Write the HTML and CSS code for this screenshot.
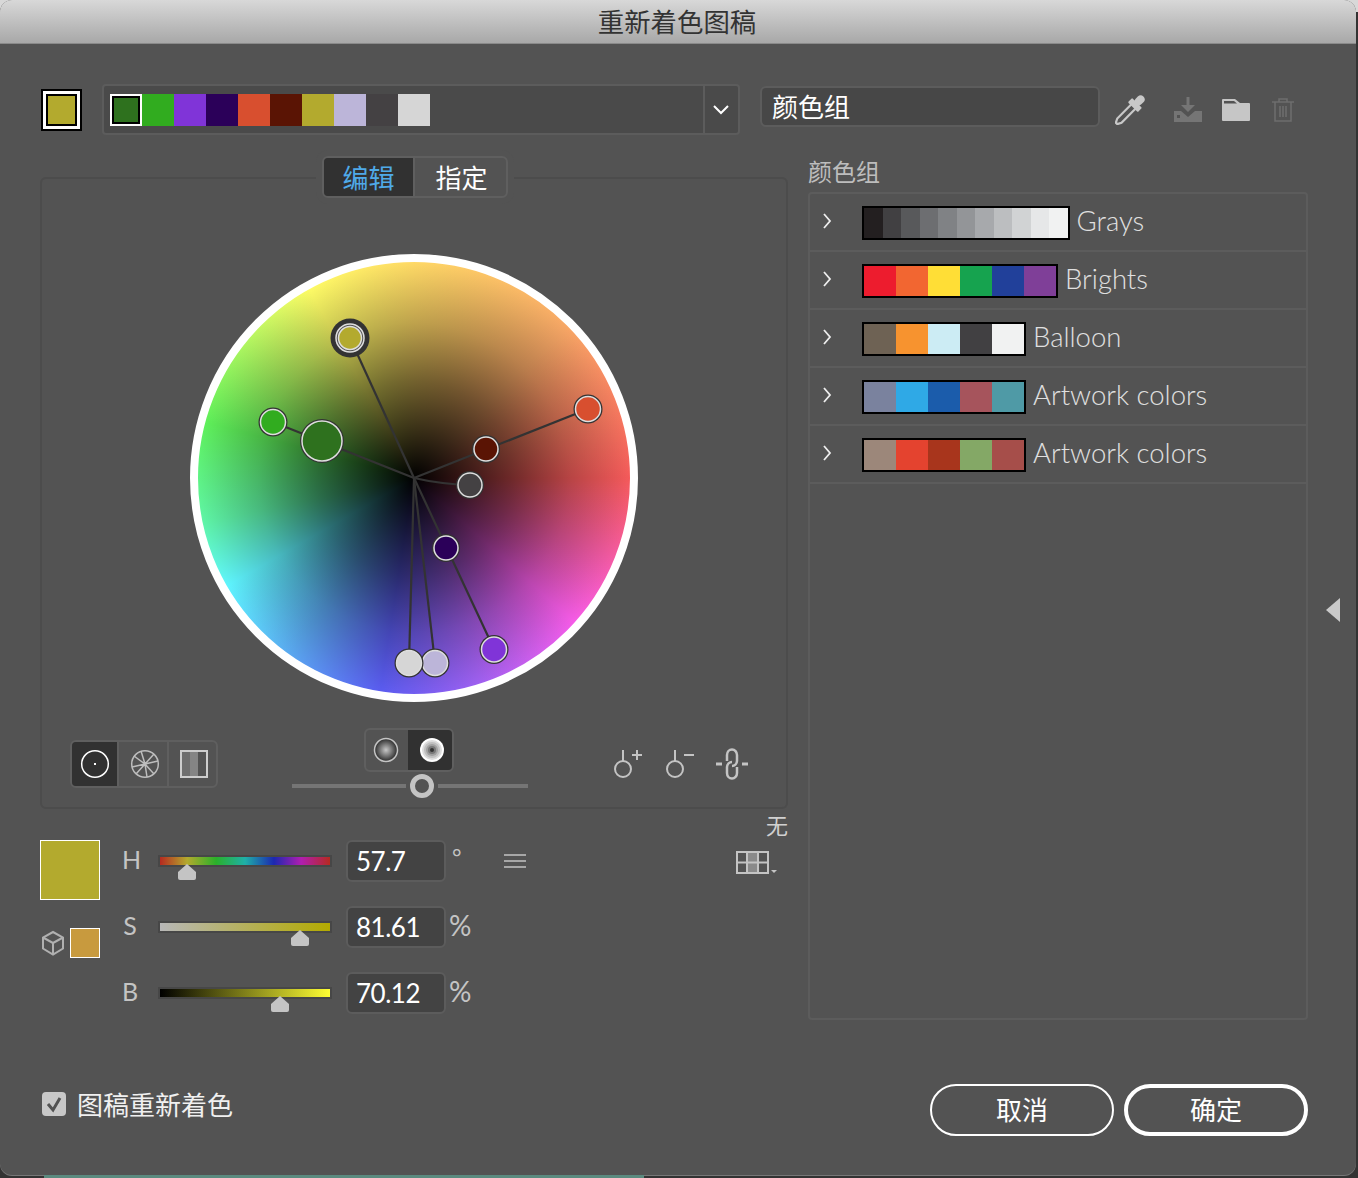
FILE: index.html
```html
<!DOCTYPE html>
<html>
<head>
    <title>重新着色图稿</title>
    <link rel="stylesheet" href="styles.css">
</head>
<body>
    <div class="dialog">
        <div class="titlebar">重新着色图稿</div>

        <div class="top-row">
            <div class="active-swatch"><span></span></div>
            <div class="harmony-bar">
                <div class="harmony-swatches">
                    <span class="selected" style="background-color: #2e711e"></span>
                    <span style="background-color: #31ac1f"></span>
                    <span style="background-color: #8034d8"></span>
                    <span style="background-color: #2b0059"></span>
                    <span style="background-color: #d84f2f"></span>
                    <span style="background-color: #5a1404"></span>
                    <span style="background-color: #b3aa2e"></span>
                    <span style="background-color: #bcb5d9"></span>
                    <span style="background-color: #444143"></span>
                    <span style="background-color: #d6d6d6"></span>
                </div>
                <div class="harmony-arrow">
                    <svg width="16" height="10" viewBox="0 0 16 10"><path d="M1 1l7 7 7-7" fill="none" stroke="#fff" stroke-width="2"/></svg>
                </div>
            </div>
            <div class="name-field">颜色组</div>
            <div class="top-icons">
                <svg class="icon-dropper" width="30" height="30" viewBox="0 0 30 30">
                    <g transform="rotate(45 15 15)">
                        <rect x="11" y="-4" width="8" height="11" rx="4" fill="#c8c8c8"/>
                        <rect x="8" y="5" width="14" height="6" rx="1" fill="#c8c8c8"/>
                        <path d="M12 10v20l2 4h2l2-4v-20" fill="none" stroke="#c8c8c8" stroke-width="2.200"/>
                    </g>
                </svg>
                <svg class="icon-save" width="28" height="25" viewBox="0 0 28 25">
                    <path d="M12.500 0h3v8h5.500l-7 7-7-7h5.500z" fill="#757575"/>
                    <path fill-rule="evenodd" d="M0 14h7l7 6 7-6h7v11h-28zM3 18v3h3v-3z" fill="#757575"/>
                </svg>
                <svg class="icon-folder" width="28" height="22" viewBox="0 0 28 22">
                    <path d="M0 1q0-1 1-1h12l5 4h9q1 0 1 1v16q0 1-1 1h-26q-1 0-1-1z" fill="#c6c6c6"/>
                    <path d="M2 2h10l3 2.500h-13z" fill="#535353"/>
                </svg>
                <svg class="icon-trash" width="22" height="24" viewBox="0 0 22 24">
                    <path d="M0 4h22M7 4v-3h8v3M3 4v19h16v-19M8 8v11M11 8v11M14 8v11" fill="none" stroke="#6e6e6e" stroke-width="1.500"/>
                </svg>
            </div>
        </div>

        <div class="main">
            <div class="left-col">
                <div class="tabs">
                    <div class="tab active">编辑</div>
                    <div class="tab">指定</div>
                </div>

                <div class="panel">
                    <div class="wheel">
                        <svg class="wheel-nodes" width="448" height="448" viewBox="0 0 448 448">
                            <g class="links">
                                <path d="M224 224L160 84"/>
                                <path d="M224 224L83 168"/>
                                <path d="M224 224L398 155"/>
                                <path d="M224 224Q250 230 280 231"/>
                                <path d="M224 224L304 395"/>
                                <path d="M224 224L245 409"/>
                                <path d="M224 224L219 409"/>
                            </g>
                            <circle class="halo" cx="160" cy="84" r="19.500"/>
                            <circle class="node" cx="160" cy="84" r="14" fill="#535353"/>
                            <circle class="node" cx="160" cy="84" r="11.500" fill="#b3aa2e" stroke="#333"/>
                            <circle class="halo" cx="398" cy="155" r="14.500"/>
                            <circle class="node" cx="398" cy="155" r="12.500" fill="#d84f2f"/>
                            <circle class="halo" cx="296" cy="195" r="14"/>
                            <circle class="node" cx="296" cy="195" r="12" fill="#5a1404"/>
                            <circle class="halo" cx="280" cy="231" r="14"/>
                            <circle class="node" cx="280" cy="231" r="12" fill="#444143"/>
                            <circle class="halo" cx="256" cy="294" r="14"/>
                            <circle class="node" cx="256" cy="294" r="12" fill="#2b0059"/>
                            <circle class="halo" cx="304" cy="395.500" r="14.500"/>
                            <circle class="node" cx="304" cy="395.500" r="12.500" fill="#8034d8"/>
                            <circle class="halo" cx="245" cy="409" r="14.500"/>
                            <circle class="node" cx="245" cy="409" r="12.500" fill="#bcb5d9"/>
                            <circle class="halo" cx="219" cy="409" r="14.500"/>
                            <circle class="node" cx="219" cy="409" r="12.500" fill="#d6d6d6"/>
                            <circle class="halo" cx="83" cy="168" r="14.500"/>
                            <circle class="node" cx="83" cy="168" r="12.500" fill="#31ac1f"/>
                            <circle class="halo" cx="132" cy="187" r="22"/>
                            <circle class="node" cx="132" cy="187" r="20" fill="#2e711e"/>
                        </svg>
                    </div>

                    <div class="tools">
                        <div class="mode-group">
                            <div class="mode active">
                                <svg width="30" height="30" viewBox="0 0 30 30">
                                    <circle cx="15" cy="15" r="13.300" fill="none" stroke="#fff" stroke-width="1.500"/>
                                    <rect x="14" y="14" width="2" height="2" fill="#fff"/>
                                </svg>
                            </div>
                            <div class="mode">
                                <svg width="30" height="30" viewBox="0 0 30 30">
                                    <circle cx="15" cy="15" r="13.300" fill="none" stroke="#bdbdbd" stroke-width="1.500"/>
                                    <path d="M15 15L11 2M15 15L24 5M15 15L28 12M15 15L24 25M15 15L17 28M15 15L6 25M15 15L2 18M15 15L4 7" stroke="#bdbdbd" stroke-width="1.500"/>
                                </svg>
                            </div>
                            <div class="mode">
                                <svg width="30" height="30" viewBox="0 0 30 30">
                                    <rect x="2" y="2" width="9" height="26" fill="#6e6e6e"/>
                                    <rect x="11" y="2" width="8" height="26" fill="#858585"/>
                                    <rect x="2" y="2" width="26" height="26" fill="none" stroke="#cdcdcd" stroke-width="2"/>
                                </svg>
                            </div>
                        </div>

                        <div class="wheel-control">
                            <div class="display-toggle">
                                <div class="display-btn">
                                    <svg width="26" height="26" viewBox="0 0 26 26">
                                        <defs>
                                            <radialGradient id="softDot">
                                                <stop offset="0" stop-color="#c8c8c8"/>
                                                <stop offset="1" stop-color="#2a2a2a"/>
                                            </radialGradient>
                                        </defs>
                                        <circle cx="13" cy="13" r="11.500" fill="url(#softDot)" stroke="#c4c4c4" stroke-width="1.500"/>
                                    </svg>
                                </div>
                                <div class="display-btn active">
                                    <svg width="26" height="26" viewBox="0 0 26 26">
                                        <circle cx="13" cy="13" r="12" fill="#fff"/>
                                        <circle cx="13" cy="13" r="10" fill="#ddd"/>
                                        <circle cx="13" cy="13" r="8" fill="#c0c0c0"/>
                                        <circle cx="13" cy="13" r="6" fill="#a0a0a0"/>
                                        <circle cx="13" cy="13" r="4" fill="#787878"/>
                                        <circle cx="13" cy="13" r="2" fill="#333"/>
                                    </svg>
                                </div>
                            </div>
                            <div class="range">
                                <span class="range-track before"></span>
                                <span class="range-thumb"></span>
                                <span class="range-track after"></span>
                            </div>
                        </div>

                        <div class="link-icons">
                            <svg width="28" height="28" viewBox="0 0 28 28">
                                <circle cx="9" cy="19" r="8" fill="none" stroke="#c4c4c4" stroke-width="2"/>
                                <path d="M9 0v11M18 5h10M23 0v10" stroke="#c4c4c4" stroke-width="2" fill="none"/>
                            </svg>
                            <svg width="28" height="28" viewBox="0 0 28 28">
                                <circle cx="9" cy="19" r="8" fill="none" stroke="#c4c4c4" stroke-width="2"/>
                                <path d="M9 0v11M18 5h10" stroke="#c4c4c4" stroke-width="2" fill="none"/>
                            </svg>
                            <svg width="32" height="32" viewBox="0 0 32 32">
                                <path d="M0 14.500h6v3h-6zM26 14.500h6v3h-6z" fill="#c4c4c4"/>
                                <path d="M11 13V7a5 5.500 0 0 1 10 0V13a5 5.500 0 0 1-5 5" fill="none" stroke="#c4c4c4" stroke-width="2.500"/>
                                <path d="M21 19V25a5 5.500 0 0 1-10 0V19a5 5.500 0 0 1 5-5" fill="none" stroke="#c4c4c4" stroke-width="2.500"/>
                            </svg>
                        </div>
                    </div>
                </div>

                <div class="picker">
                    <div class="picker-swatches">
                        <div class="big-swatch"></div>
                        <div class="gamut">
                            <svg width="24" height="26" viewBox="0 0 24 26">
                                <path d="M12 2l10 5.500v11l-10 6-10-6v-11zM2 7.500l10 5.500 10-5.500M12 13v11.500" fill="none" stroke="#b0b0b0" stroke-width="2"/>
                            </svg>
                            <div class="gamut-swatch"></div>
                        </div>
                    </div>

                    <div class="channels">
                        <div class="channel">
                            <div class="channel-label">H</div>
                            <div class="slider hue"><svg class="thumb" style="left: 18px" width="18" height="16" viewBox="0 0 18 16"><path d="M9 0l9 8v6q0 2-2 2h-14q-2 0-2-2v-6z"/></svg></div>
                            <div class="num-field">57.7</div>
                            <div class="unit deg">°</div>
                            <svg class="menu-icon" width="22" height="14" viewBox="0 0 22 14"><path d="M0 1h22M0 7h22M0 13h22" stroke="#c4c4c4" stroke-width="1.500"/></svg>
                        </div>
                        <div class="channel">
                            <div class="channel-label">S</div>
                            <div class="slider sat"><svg class="thumb" style="left: 131px" width="18" height="16" viewBox="0 0 18 16"><path d="M9 0l9 8v6q0 2-2 2h-14q-2 0-2-2v-6z"/></svg></div>
                            <div class="num-field">81.61</div>
                            <div class="unit">%</div>
                        </div>
                        <div class="channel">
                            <div class="channel-label">B</div>
                            <div class="slider bri"><svg class="thumb" style="left: 111px" width="18" height="16" viewBox="0 0 18 16"><path d="M9 0l9 8v6q0 2-2 2h-14q-2 0-2-2v-6z"/></svg></div>
                            <div class="num-field">70.12</div>
                            <div class="unit">%</div>
                        </div>
                    </div>

                    <div class="limit">
                        <div class="limit-label">无</div>
                        <div class="limit-icon">
                            <svg width="42" height="24" viewBox="0 0 42 24">
                                <rect x="11" y="1" width="11" height="21" fill="#8a8a8a"/>
                                <path d="M1 1h31v21h-31zM11 1v21M22 1v21M1 11.500h31" fill="none" stroke="#c4c4c4" stroke-width="2"/>
                                <path d="M35 19h6l-3 3z" fill="#c4c4c4"/>
                            </svg>
                        </div>
                    </div>
                </div>
            </div>

            <div class="right-col">
                <div class="list-title">颜色组</div>
                <div class="group-list">
                    <div class="group-row">
                        <svg class="row-arrow" width="10" height="16" viewBox="0 0 10 16"><path d="M2 1l6 7-6 7" fill="none" stroke="#eee" stroke-width="1.800"/></svg>
                        <div class="strip grays">
                            <span style="background-color: #231f20"></span>
                            <span style="background-color: #414042"></span>
                            <span style="background-color: #58595b"></span>
                            <span style="background-color: #6d6e71"></span>
                            <span style="background-color: #808285"></span>
                            <span style="background-color: #939598"></span>
                            <span style="background-color: #a7a9ac"></span>
                            <span style="background-color: #bcbec0"></span>
                            <span style="background-color: #d1d3d4"></span>
                            <span style="background-color: #e6e7e8"></span>
                            <span style="background-color: #f1f2f2"></span>
                        </div>
                        <div class="group-name">Grays</div>
                    </div>
                    <div class="group-row">
                        <svg class="row-arrow" width="10" height="16" viewBox="0 0 10 16"><path d="M2 1l6 7-6 7" fill="none" stroke="#eee" stroke-width="1.800"/></svg>
                        <div class="strip">
                            <span style="background-color: #ed1c2e"></span>
                            <span style="background-color: #f26631"></span>
                            <span style="background-color: #ffde36"></span>
                            <span style="background-color: #16a34f"></span>
                            <span style="background-color: #21409a"></span>
                            <span style="background-color: #7f3f98"></span>
                        </div>
                        <div class="group-name">Brights</div>
                    </div>
                    <div class="group-row">
                        <svg class="row-arrow" width="10" height="16" viewBox="0 0 10 16"><path d="M2 1l6 7-6 7" fill="none" stroke="#eee" stroke-width="1.800"/></svg>
                        <div class="strip">
                            <span style="background-color: #6e6254"></span>
                            <span style="background-color: #f7932f"></span>
                            <span style="background-color: #ccecf4"></span>
                            <span style="background-color: #414042"></span>
                            <span style="background-color: #f1f2f2"></span>
                        </div>
                        <div class="group-name">Balloon</div>
                    </div>
                    <div class="group-row">
                        <svg class="row-arrow" width="10" height="16" viewBox="0 0 10 16"><path d="M2 1l6 7-6 7" fill="none" stroke="#eee" stroke-width="1.800"/></svg>
                        <div class="strip">
                            <span style="background-color: #7a829e"></span>
                            <span style="background-color: #2fa9e6"></span>
                            <span style="background-color: #1b5cab"></span>
                            <span style="background-color: #a6545c"></span>
                            <span style="background-color: #4f9aa6"></span>
                        </div>
                        <div class="group-name">Artwork colors</div>
                    </div>
                    <div class="group-row">
                        <svg class="row-arrow" width="10" height="16" viewBox="0 0 10 16"><path d="M2 1l6 7-6 7" fill="none" stroke="#eee" stroke-width="1.800"/></svg>
                        <div class="strip">
                            <span style="background-color: #9c877a"></span>
                            <span style="background-color: #e4432f"></span>
                            <span style="background-color: #a8351c"></span>
                            <span style="background-color: #84a866"></span>
                            <span style="background-color: #a64e4a"></span>
                        </div>
                        <div class="group-name">Artwork colors</div>
                    </div>
                </div>
            </div>

            <svg class="collapse-arrow" width="14" height="24" viewBox="0 0 14 24"><path d="M14 0v24l-14-12z" fill="#cacaca"/></svg>
        </div>

        <div class="footer">
            <div class="recolor-check">
                <svg width="24" height="24" viewBox="0 0 24 24">
                    <rect width="24" height="24" rx="4" fill="#c8c8c8"/>
                    <path d="M6 12l5 6 7-12" fill="none" stroke="#535353" stroke-width="3"/>
                </svg>
                <span>图稿重新着色</span>
            </div>
            <div class="footer-buttons">
                <button class="btn">取消</button>
                <button class="btn primary">确定</button>
            </div>
        </div>
    </div>
    <div class="desktop-strip"></div>
</body>
</html>
```

FILE: styles.css
```css
* {
    box-sizing: border-box;
}

body {
    margin: 0;
    height: 1178px;
    overflow: hidden;
    background: linear-gradient(#d8d8d8 0, #d8d8d8 12px, #333 12px);
    font-family: "Lato", "Noto Sans CJK SC", sans-serif;
    color: #fff;
}

.dialog {
    width: 1356px;
    height: 1175px;
    display: flex;
    flex-direction: column;
    background-color: #535353;
    border-radius: 12px;
    box-shadow: 0 1px 0 #777;
    overflow: hidden;
}

.titlebar {
    height: 44px;
    flex: none;
    padding-right: 2px;
    text-align: center;
    font-size: 26.400px;
    line-height: 44px;
    color: #333;
    background: linear-gradient(#d8d8d8, #a8a8a8);
    border-bottom: 1px solid #8a8a8a;
}

/* top row */
.top-row {
    display: flex;
    align-items: center;
    margin: 40px 0 0 41px;
    height: 51px;
}

.active-swatch {
    width: 41px;
    height: 42px;
    border: 2px solid #000;
    background-color: #fff;
    padding: 3px;
}

.active-swatch span {
    display: block;
    height: 100%;
    background-color: #b3aa2e;
    border: 2px solid #000;
}

.harmony-bar {
    width: 638px;
    height: 51px;
    margin-left: 20px;
    display: flex;
    background-color: #4a4a4a;
    border: 2px solid #5c5c5c;
    border-radius: 4px;
}

.harmony-swatches {
    flex: 1;
    display: flex;
    padding: 8px 6px;
}

.harmony-swatches span {
    width: 32px;
    height: 32px;
}

.harmony-swatches .selected {
    border: 2px solid #fff;
    box-shadow: inset 0 0 0 2px #000;
}

.harmony-arrow {
    width: 35px;
    padding-right: 2px;
    display: flex;
    align-items: center;
    justify-content: center;
    border-left: 2px solid #5c5c5c;
}

.name-field {
    width: 340px;
    height: 41px;
    align-self: flex-start;
    margin: 2px 0 0 20px;
    padding-left: 10px;
    font-size: 26px;
    line-height: 39px;
    background-color: #474747;
    border: 2px solid #5c5c5c;
    border-radius: 6px;
}

.top-icons {
    display: flex;
    align-items: center;
    margin-left: 15px;
}

.icon-save {
    margin-left: 29px;
}

.icon-folder {
    margin-left: 20px;
}

.icon-trash {
    margin-left: 22px;
}

/* main area */
.main {
    display: flex;
    gap: 20px;
    margin: 21px 0 0 40px;
    position: relative;
}

.left-col {
    width: 748px;
}

.tabs {
    position: relative;
    z-index: 1;
    width: 186px;
    height: 42px;
    margin-left: 282px;
    display: flex;
    background-color: #535353;
    border: 2px solid #5f5f5f;
    border-radius: 6px;
    box-shadow: 0 0 0 6px #535353;
    overflow: hidden;
}

.tab {
    width: 91px;
    padding-left: 2px;
    text-align: center;
    font-size: 26px;
    line-height: 40px;
}

.tab.active {
    padding-left: 0;
    color: #4fa9e8;
    background-color: #313131;
    border-right: 2px solid #5f5f5f;
}

.panel {
    height: 632px;
    margin-top: -21px;
    padding-top: 75px;
    border: 2px solid #4c4c4c;
    border-radius: 6px;
}

.wheel {
    position: relative;
    width: 448px;
    height: 448px;
    margin: 0 auto;
    border: 8px solid #fff;
    border-radius: 50%;
    background:
        radial-gradient(closest-side, #000 0, rgba(0, 0, 0, 0.82) 18%, rgba(0, 0, 0, 0.55) 45%, rgba(0, 0, 0, 0.25) 72%, transparent 100%),
        conic-gradient(#ffd966 0deg, #f8a866 45deg, #f45a5a 90deg, #f65ce8 132deg, #a060f0 162deg, #5a5cf0 189deg, #5aa8f0 215deg, #5ff5ff 240deg, #5ff5a8 258deg, #5ff05a 285deg, #fdfb66 331deg, #ffd966 360deg);
}

.wheel-nodes {
    position: absolute;
    top: -8px;
    left: -8px;
}

.links path {
    fill: none;
    stroke: #333;
    stroke-width: 2.200;
}

.halo {
    fill: #333;
}

.node {
    stroke: #dedede;
    stroke-width: 1.500;
}

.tools {
    display: flex;
    align-items: flex-start;
    margin-top: 26px;
    padding-left: 28px;
}

.mode-group {
    width: 148px;
    height: 48px;
    margin-top: 12px;
    display: flex;
    border: 2px solid #5f5f5f;
    border-radius: 6px;
    overflow: hidden;
}

.mode {
    flex: 1;
    display: flex;
    align-items: center;
    justify-content: center;
    border-left: 2px solid #5f5f5f;
}

.mode:nth-child(2) {
    padding-left: 4px;
}

.mode:nth-child(3) {
    padding-left: 4px;
}

.mode.active {
    flex: none;
    width: 45px;
    border-left: none;
    background-color: #313131;
}

.wheel-control {
    width: 236px;
    margin-left: 74px;
}

.display-toggle {
    width: 90px;
    height: 44px;
    margin-left: 72px;
    display: flex;
    border: 2px solid #5f5f5f;
    border-radius: 6px;
    overflow: hidden;
}

.display-btn {
    width: 41px;
    display: flex;
    align-items: center;
    justify-content: center;
}

.display-btn.active {
    width: 45px;
    margin-left: 2px;
    padding-left: 4px;
    background-color: #313131;
}

.range {
    display: flex;
    align-items: center;
    margin-top: 2px;
}

.range-track {
    height: 4px;
    background-color: #757575;
}

.range-track.before {
    width: 114px;
}

.range-track.after {
    width: 90px;
}

.range-thumb {
    width: 24px;
    height: 24px;
    margin: 0 4px;
    border: 5px solid #c4c4c4;
    border-radius: 50%;
}

.link-icons {
    display: flex;
    align-items: flex-start;
    margin: 22px 0 0 86px;
}

.link-icons svg:nth-child(2) {
    margin-left: 24px;
}

.link-icons svg:nth-child(3) {
    margin: -2px 0 0 22px;
}

/* colour picker under the panel */
.picker {
    display: flex;
    margin-top: 4px;
}

.picker-swatches {
    width: 60px;
    padding-top: 27px;
}

.big-swatch {
    width: 60px;
    height: 60px;
    background-color: #b3aa2e;
    border: 1px solid #fff;
}

.gamut {
    display: flex;
    align-items: center;
    justify-content: space-between;
    margin-top: 28px;
    padding-left: 1px;
}

.gamut-swatch {
    width: 30px;
    height: 30px;
    background-color: #c89a3e;
    border: 1px solid #fff;
}

.channels {
    padding: 27px 0 0 22px;
}

.channel {
    display: flex;
    align-items: center;
    height: 42px;
    margin-bottom: 24px;
}

.channel-label {
    width: 16px;
    margin-bottom: 4px;
    text-align: center;
    font-size: 25px;
    color: #c4c4c4;
}

.slider {
    position: relative;
    width: 174px;
    height: 12px;
    margin-left: 20px;
    border: 2px solid #474747;
}

.slider.hue {
    background: linear-gradient(to right, #b62a20, #b3aa2e 16%, #2ab02a 33%, #1fb0a8 50%, #1c28b0 67%, #b01eb0 83%, #b62a20);
}

.slider.sat {
    background: linear-gradient(to right, #b8b8b8, #b3aa00);
}

.slider.bri {
    background: linear-gradient(to right, #000, #ffff33);
}

.thumb {
    position: absolute;
    top: 7px;
    fill: #c4c4c4;
}

.num-field {
    width: 100px;
    height: 42px;
    margin-left: 14px;
    padding-left: 8px;
    font-size: 26px;
    letter-spacing: -0.500px;
    line-height: 38px;
    background-color: #434343;
    border: 2px solid #5c5c5c;
    border-radius: 6px;
}

.unit {
    width: 24px;
    margin: 0 0 4px 3px;
    font-size: 28px;
    color: #c4c4c4;
}

.unit.deg {
    margin: 0 0 8px 4px;
    padding-left: 2px;
    font-size: 23px;
}

.menu-icon {
    margin-left: 30px;
}

.limit {
    margin-left: auto;
    padding-right: 0;
}

.limit-label {
    height: 26px;
    text-align: right;
    font-size: 22px;
    line-height: 26px;
    color: #d0d0d0;
}

.limit-icon {
    height: 24px;
    margin: 12px 10px 0 0;
}

/* colour groups */
.right-col {
    width: 500px;
}

.list-title {
    height: 36px;
    font-size: 24px;
    line-height: 31px;
    color: #bdbdbd;
}

.group-list {
    height: 828px;
    border: 2px solid #5c5c5c;
    border-radius: 4px;
}

.group-row {
    height: 58px;
    display: flex;
    align-items: center;
    padding-left: 12px;
    border-bottom: 2px solid #5c5c5c;
}

.row-arrow {
    flex: none;
    margin-bottom: 2px;
}

.strip {
    display: flex;
    height: 34px;
    margin: 2px 0 0 30px;
    border: 2px solid #000;
}

.strip span {
    width: 32px;
}

.strip.grays span {
    width: 18.500px;
}

.group-name {
    margin: 0 0 4px 7px;
    font-size: 27.500px;
    font-weight: 300;
    color: #e0e0e0;
}

.collapse-arrow {
    position: absolute;
    right: 16px;
    top: 442px;
}

/* footer */
.footer {
    display: flex;
    justify-content: space-between;
    align-items: center;
    margin-top: auto;
    padding: 0 48px 39px 42px;
}

.recolor-check {
    display: flex;
    align-items: center;
    gap: 11px;
    margin-bottom: 12px;
    font-size: 26px;
    color: #f0f0f0;
}

.recolor-check span {
    margin-top: -2px;
}

.footer-buttons {
    display: flex;
    gap: 10px;
}

.btn {
    width: 184px;
    height: 52px;
    padding-bottom: 4px;
    font-family: inherit;
    font-size: 26px;
    color: #fff;
    background: none;
    border: 2px solid #fff;
    border-radius: 26px;
}

.btn.primary {
    border-width: 4px;
}

.desktop-strip {
    width: 600px;
    height: 3px;
    margin-left: 44px;
    background-color: #5b8a7f;
}
```
